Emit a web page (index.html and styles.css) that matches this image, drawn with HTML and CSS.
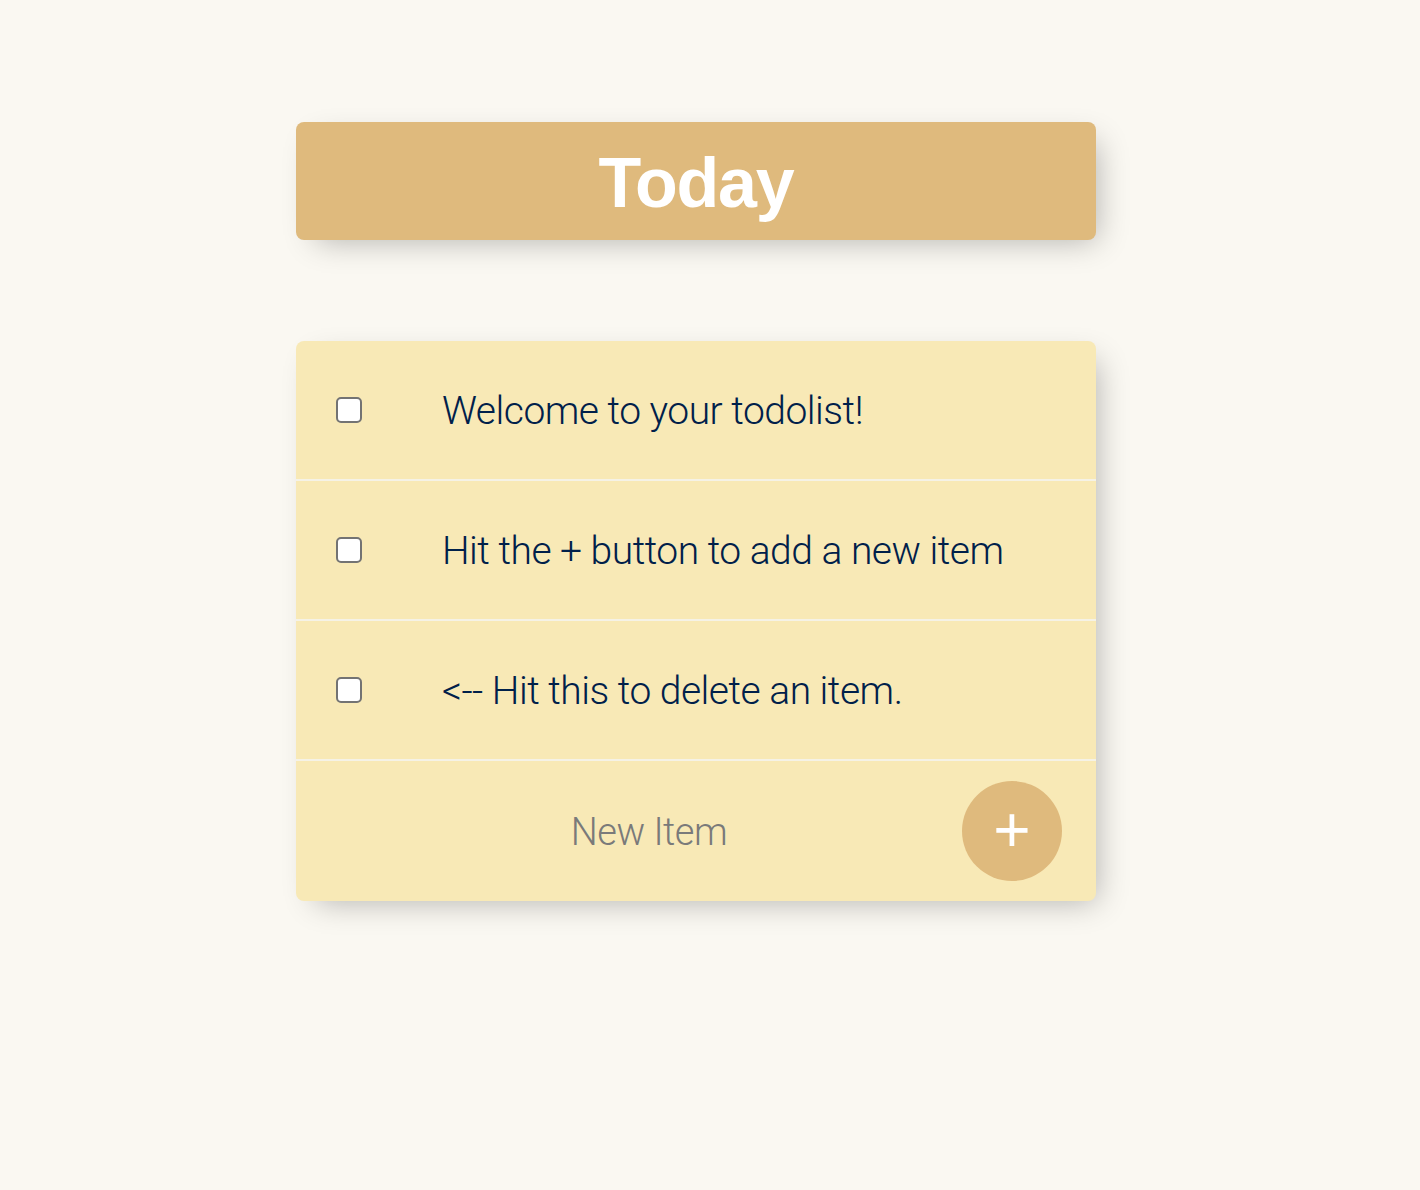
FILE: index.html
```html
<!DOCTYPE html>
<html lang="en">
<head>
<meta charset="utf-8">
<title>Today</title>
<link rel="stylesheet" href="styles.css">
</head>
<body>
  <div class="box heading">
    <h1 class="title">Today</h1>
  </div>
  <div class="box list">
    <div class="item">
      <input class="check" type="checkbox">
      <p class="item-text">Welcome to your todolist!</p>
    </div>
    <div class="item">
      <input class="check" type="checkbox">
      <p class="item-text">Hit the + button to add a new item</p>
    </div>
    <div class="item">
      <input class="check" type="checkbox">
      <p class="item-text">&lt;-- Hit this to delete an item.</p>
    </div>
    <form class="item new-form">
      <input class="new-input" type="text" placeholder="New Item" autocomplete="off">
      <button class="add-btn" type="button">+</button>
    </form>
  </div>
</body>
</html>
```
FILE: styles.css
```css
html {
  background-color: #faf8f2;
}
body {
  margin: 0;
  min-height: 1190px;
  box-sizing: border-box;
  padding: 122px 0 0 296px;
  font-family: Roboto, "Liberation Sans", Arial, sans-serif;
}
.box {
  width: 800px;
  border-radius: 8px;
  box-shadow: 10px 10px 30px -10px rgba(0, 0, 0, 0.3);
}
.heading {
  background-color: #dfba7d;
  height: 118px;
  display: flex;
  align-items: center;
  justify-content: center;
}
.title {
  margin: 0;
  color: #fff;
  font-family: "Liberation Sans", Arial, sans-serif;
  font-weight: 700;
  font-size: 70px;
  letter-spacing: -1.2px;
  line-height: 1;
  padding-top: 4px;
}
.list {
  margin-top: 101px;
  background-color: #f8e9b6;
}
.item {
  height: 138px;
  display: flex;
  align-items: center;
  border-bottom: 2px solid #f5f2e6;
}
.item:last-child {
  border-bottom: 0;
  height: 140px;
}
.check {
  appearance: none;
  -webkit-appearance: none;
  width: 26px;
  height: 26px;
  margin: 0 40px;
  border: 2px solid #737373;
  border-radius: 5px;
  background: #fff;
  flex: none;
}
.item-text {
  margin: 0;
  padding: 2px 40px 0;
  font-size: 39px;
  font-weight: 300;
  letter-spacing: -0.5px;
  color: #00204a;
}
.new-form {
  padding-left: 40px;
}
.new-input {
  width: 626px;
  height: 120px;
  padding: 2px 0 0;
  border: none;
  background: transparent;
  text-align: center;
  font-family: Roboto, "Liberation Sans", Arial, sans-serif;
  font-size: 38px;
  font-weight: 300;
  letter-spacing: -0.5px;
  color: #00204a;
  outline: none;
}
.new-input::placeholder {
  color: #7a7a7a;
}
.add-btn {
  width: 100px;
  height: 100px;
  border: 0;
  border-radius: 50%;
  background-color: #dfba7d;
  color: #fff;
  font-family: "Liberation Sans", Arial, sans-serif;
  font-size: 64px;
  line-height: 1;
  padding: 0 0 2px;
  display: flex;
  align-items: center;
  justify-content: center;
}
```
